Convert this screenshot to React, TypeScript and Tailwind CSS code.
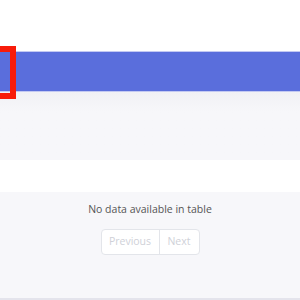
export default function App() {
  return (
    <div className="w-[300px] h-[300px] overflow-hidden bg-white flex flex-col font-['Open_Sans',sans-serif]">
      {/* top white space */}
      <div className="h-[51px] shrink-0" />

      {/* blue header band with highlighted cell */}
      <div className="relative h-[41px] shrink-0 bg-[#5a6edc] border-y border-[#c3c9f2]">
        <div className="absolute left-[-10px] top-[-6px] w-[26px] h-[53px] border-[6px] border-[#f81c0a]" />
      </div>

      {/* gray empty row */}
      <div className="h-[68px] shrink-0 bg-gradient-to-b from-[#f1f1f5] to-[#f7f7fa] to-[30%]" />

      {/* white row */}
      <div className="h-[32px] shrink-0 bg-white" />

      {/* footer */}
      <div className="flex-1 bg-[#f7f7fa] flex flex-col items-center border-b-2 border-[#e4e4ec]">
        <p className="mt-[9px] text-[10.5px] text-[#555] leading-[16px]">No data available in table</p>
        <div className="mt-[12px] flex h-[26px] rounded-[4px] border border-[#e3e5ea] bg-white text-[10.5px] text-[#cfd1d8]">
          <span className="w-[58px] flex items-center justify-center border-r border-[#e3e5ea]">Previous</span>
          <span className="w-[39px] flex items-center justify-center">Next</span>
        </div>
      </div>
    </div>
  )
}
